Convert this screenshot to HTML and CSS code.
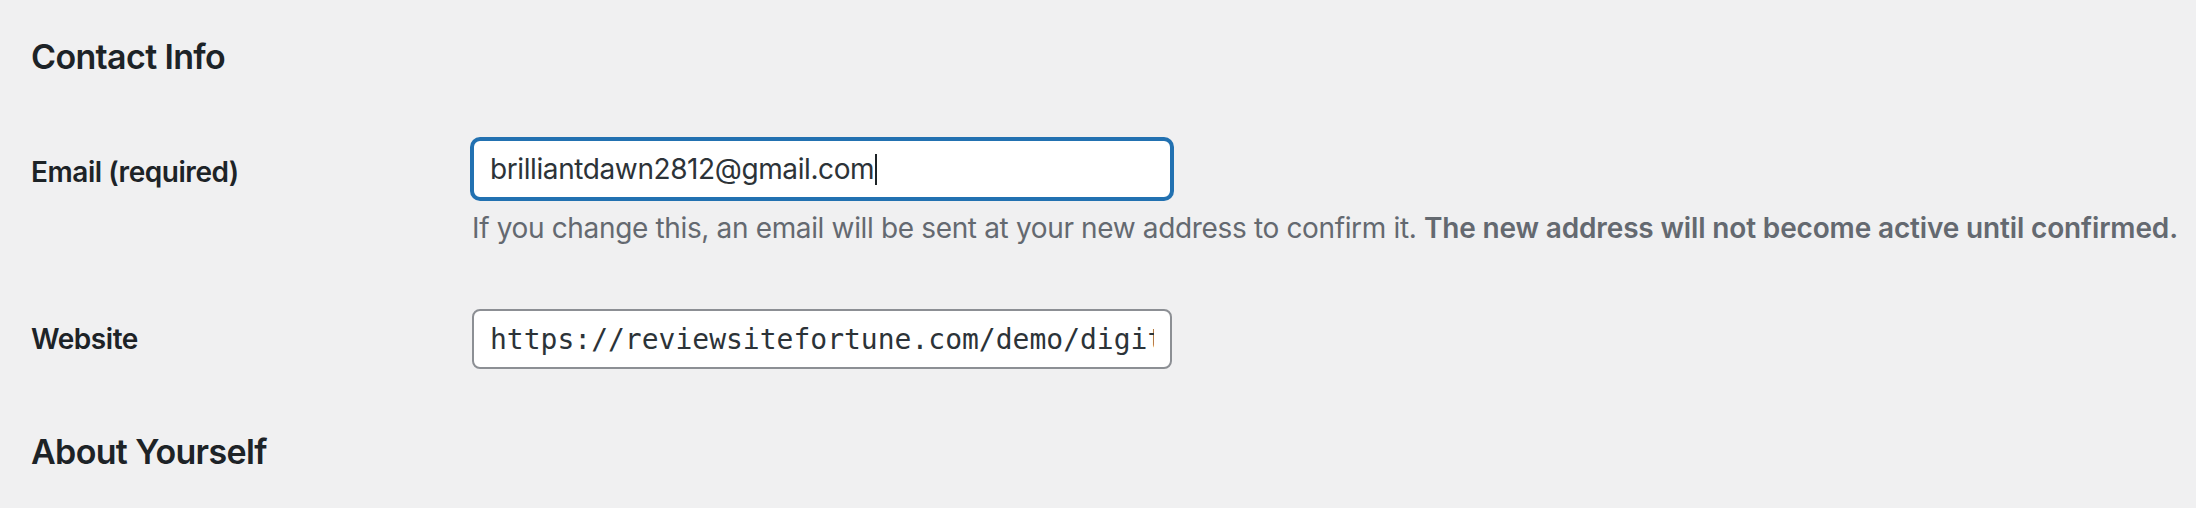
FILE: index.html
```html
<!DOCTYPE html>
<html lang="en">
<head>
<meta charset="utf-8">
<title>Profile</title>
<link rel="stylesheet" href="styles.css">
</head>
<body>
<div class="wrap">
  <h2 class="section-title">Contact Info</h2>
  <div class="form-table">
    <div class="form-row form-row--email">
      <div class="form-label"><label>Email (required)</label></div>
      <div class="form-field">
        <div class="field field--focus"><span class="field-text">brilliantdawn2812@gmail.com</span><span class="caret"></span></div>
        <p class="description">If you change this, an email will be sent at your new address to confirm it. <strong>The new address will not become active until confirmed.</strong></p>
      </div>
    </div>
    <div class="form-row">
      <div class="form-label"><label>Website</label></div>
      <div class="form-field">
        <div class="field"><span class="field-text field-text--mono">https://reviewsitefortune.com/demo/digital-marketing/</span></div>
      </div>
    </div>
  </div>
  <h2 class="section-title">About Yourself</h2>
</div>
</body>
</html>
```

FILE: styles.css
```css
* { box-sizing: border-box; }
body {
  margin: 0;
  background: #f0f0f1;
  color: #1d2327;
  font-family: Inter, "Liberation Sans", sans-serif;
  font-size: 26px;
}
.wrap { padding: 35px 0 0 31px; }
.section-title {
  margin: 0;
  font-size: 34px;
  font-weight: 600;
  line-height: 44px;
  letter-spacing: -0.65px;
}
.form-table { margin: 30px 0 31px; }
.form-row { display: flex; }
.form-label {
  flex: none;
  width: 420px;
  padding: 42px 20px 0 0;
  font-size: 28px;
  font-weight: 600;
  line-height: 36px;
  letter-spacing: -0.45px;
}
.form-row--email .form-label { padding-top: 45px; }
.form-field { padding: 30px 21px; }
.field {
  display: flex;
  align-items: center;
  width: 700px;
  height: 60px;
  padding: 0 16px;
  background: #fff;
  border: 2px solid #8c8f94;
  border-radius: 8px;
  color: #2c3338;
  font-size: 28px;
  letter-spacing: -0.4px;
}
.field--focus {
  border-color: #2271b1;
  box-shadow: 0 0 0 2px #2271b1;
}
.field-text {
  flex: 0 1 auto;
  min-width: 0;
  overflow: hidden;
  white-space: nowrap;
}
.field-text--mono {
  flex: 1;
  font-family: "DejaVu Sans Mono", monospace;
  letter-spacing: 0;
}
.caret {
  flex: none;
  width: 2px;
  height: 31px;
  margin-left: 1px;
  background: #1d2327;
}
.description {
  margin: 8px 0 0;
  font-size: 28px;
  line-height: 42px;
  color: #646970;
  white-space: nowrap;
  letter-spacing: -0.35px;
}
.description strong {
  font-weight: 600;
  letter-spacing: -0.15px;
}
```
